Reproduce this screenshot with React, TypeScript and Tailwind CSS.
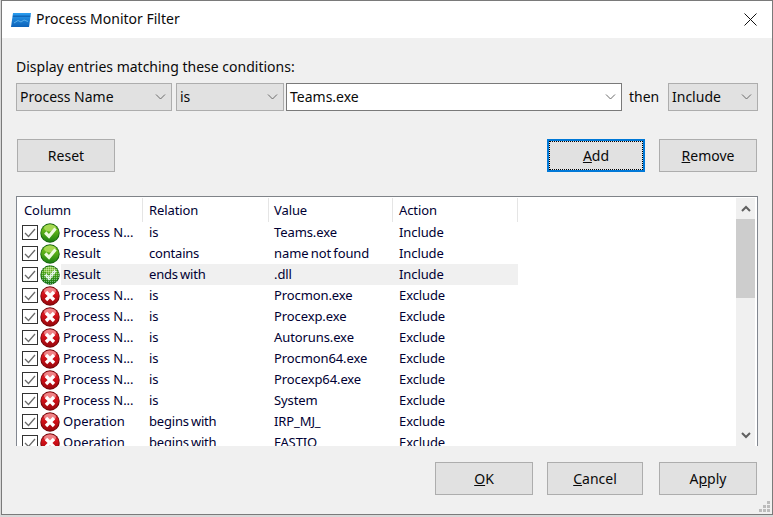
import React from "react";

const Chevron = ({ className = "" }: { className?: string }) => (
  <svg width="11" height="6" viewBox="0 0 11 6" className={className}>
    <path d="M1 0.5 L5.5 5 L10 0.5" fill="none" stroke="#6b6b6b" strokeWidth="1" />
  </svg>
);

const Combo = ({ text, className }: { text: string; className: string }) => (
  <div className={`flex h-[28px] items-center justify-between pl-[3px] pr-[5px] border ${className}`}>
    <span>{text}</span>
    <Chevron />
  </div>
);

const Btn = ({ children, className = "" }: { children: React.ReactNode; className?: string }) => (
  <div className={`flex h-[33px] items-center justify-center border border-[#adadad] bg-[#e1e1e1] ${className}`}>
    {children}
  </div>
);

const Check = () => (
  <div className="flex h-[15px] w-[16px] shrink-0 items-center justify-center border border-[#333333] bg-white">
    <svg width="12" height="10" viewBox="0 0 12 10">
      <path d="M1 5 L4.5 8.5 L11 1" fill="none" stroke="#6a6a6a" strokeWidth="1.3" />
    </svg>
  </div>
);

const Orb = ({ kind, dither }: { kind: "ok" | "no"; dither?: boolean }) => {
  const id = `${kind}${dither ? "d" : ""}`;
  const ok = kind === "ok";
  return (
    <svg width="20" height="20" viewBox="0 0 20 20" className="ml-[2px] shrink-0">
      <defs>
        <linearGradient id={`g${id}`} x1="0" y1="0" x2="0" y2="1">
          <stop offset="0%" stopColor={ok ? "#7cc520" : "#e0303a"} />
          <stop offset="45%" stopColor={ok ? "#58ae18" : "#d01018"} />
          <stop offset="100%" stopColor={ok ? "#1c7f12" : "#96070d"} />
        </linearGradient>
        <pattern id={`p${id}`} width="2" height="2" patternUnits="userSpaceOnUse">
          <rect width="1" height="1" fill="#c8e4ff" fillOpacity="0.5" />
          <rect x="1" y="1" width="1" height="1" fill="#0a6a20" fillOpacity="0.45" />
        </pattern>
      </defs>
      <circle cx="10" cy="10" r="9.7" fill={ok ? "#14600e" : "#6e0508"} />
      <circle cx="10" cy="10" r="8.8" fill={`url(#g${id})`} />
      <ellipse cx="10" cy="5" rx="6" ry="3.4" fill={ok ? "#b4e060" : "#f49a9c"} fillOpacity="0.8" />
      {ok ? (
        <path d="M5.2 9.5 L9 13.3 L15.5 5.5" fill="none" stroke="#eefbe0" strokeWidth="3.2" />
      ) : (
        <path d="M6 6 L14 14 M14 6 L6 14" fill="none" stroke="#ffffff" strokeWidth="3.4" />
      )}
      {dither && <circle cx="10" cy="10" r="9.7" fill={`url(#p${id})`} />}
    </svg>
  );
};

const rows: [string, string, string, string, "ok" | "no"][] = [
  ["Process N...", "is", "Teams.exe", "Include", "ok"],
  ["Result", "contains", "name not found", "Include", "ok"],
  ["Result", "ends with", ".dll", "Include", "ok"],
  ["Process N...", "is", "Procmon.exe", "Exclude", "no"],
  ["Process N...", "is", "Procexp.exe", "Exclude", "no"],
  ["Process N...", "is", "Autoruns.exe", "Exclude", "no"],
  ["Process N...", "is", "Procmon64.exe", "Exclude", "no"],
  ["Process N...", "is", "Procexp64.exe", "Exclude", "no"],
  ["Process N...", "is", "System", "Exclude", "no"],
  ["Operation", "begins with", "IRP_MJ_", "Exclude", "no"],
  ["Operation", "begins with", "FASTIO_", "Exclude", "no"],
];

export default function App() {
  return (
    <div className="h-[517px] w-[773px] overflow-hidden bg-[#d8d8d8] pl-px font-['Noto_Sans',sans-serif] text-[14px] leading-[20px] text-[#0a0a0a]">
      <div className="flex h-[515px] w-[772px] flex-col border border-[#7a7a7a] bg-[#f0f0f0]">
        {/* title bar */}
        <div className="flex h-[37px] shrink-0 items-center justify-between bg-white pl-[9px] pr-[15px]">
          <div className="flex items-center gap-[5px]">
            <svg width="20" height="16" viewBox="0 0 20 16">
              <defs>
                <linearGradient id="logo" x1="0" y1="0" x2="0" y2="1">
                  <stop offset="0%" stopColor="#2a9df0" />
                  <stop offset="100%" stopColor="#0d62b8" />
                </linearGradient>
              </defs>
              <path d="M2 1 H20 L18 15 H0 Z" fill="url(#logo)" />
              <path d="M2 3.5 H19.5 L19.2 5 H1.8 Z" fill="#0a57a8" fillOpacity="0.7" />
              <path d="M3 11 L7 8.5 L10 10 L13 8 L17 9.5" fill="none" stroke="#5aaee8" strokeWidth="1" />
            </svg>
            <span className="-translate-y-px">Process Monitor Filter</span>
          </div>
          <svg width="13" height="13" viewBox="0 0 13 13">
            <path d="M0.5 0.5 L12.5 12.5 M12.5 0.5 L0.5 12.5" stroke="#111111" strokeWidth="1" />
          </svg>
        </div>

        {/* content */}
        <div className="relative flex flex-1 flex-col pl-[14px]">
          <div className="mt-[19px]">Display entries matching these conditions:</div>

          <div className="mt-[6px] flex items-center">
            <Combo text="Process Name" className="w-[156px] border-[#adadad] bg-[#e1e1e1]" />
            <Combo text="is" className="ml-[4px] w-[108px] border-[#adadad] bg-[#e1e1e1]" />
            <Combo text="Teams.exe" className="ml-[2px] w-[336px] border-[#7a7a7a] bg-white" />
            <span className="ml-[7px] w-[39px]">then</span>
            <Combo text="Include" className="w-[90px] border-[#adadad] bg-[#e1e1e1]" />
          </div>

          <div className="mt-[28px] flex pl-px">
            <Btn className="w-[98px]">Reset</Btn>
            <div className="ml-[432px] flex h-[33px] w-[98px] items-center justify-center border-2 border-[#0078d7] bg-[#e1e1e1] outline-1 -outline-offset-3 outline-dotted outline-black">
              <span>
                <u>A</u>dd
              </span>
            </div>
            <Btn className="ml-[14px] w-[98px]">
              <span>
                <u>R</u>emove
              </span>
            </Btn>
          </div>

          {/* list */}
          <div className="mt-[24px] flex h-[250px] w-[742px] border-x border-t border-x-[#828790] border-t-[#7f8388] bg-white text-[13px] text-[#000033]">
            <div className="w-[719px] overflow-hidden">
              <div className="grid h-[25px] w-[501px] grid-cols-[126px_126px_124px_125px] items-center">
                {["Column", "Relation", "Value", "Action"].map((h, i) => (
                  <div
                    key={h}
                    className={`flex h-[24px] items-center border-r border-[#e5e5e5] tracking-[-0.1px] ${
                      i === 0 ? "pl-[7px]" : i === 2 ? "pl-[5px]" : "pl-[6px]"
                    }`}
                  >
                    {h}
                  </div>
                ))}
              </div>
              {rows.map((r, i) => (
                <div key={i} className="flex h-[21px] w-[501px] items-center">
                  <div className="flex w-[44px] shrink-0 items-center pl-[5px]">
                    <Check />
                    <Orb kind={r[4]} dither={i === 2} />
                  </div>
                  <div
                    className={`grid h-[21px] w-[457px] grid-cols-[82px_126px_124px_125px] items-center pb-[2px] ${
                      i === 2 ? "bg-[#f0f0f0]" : ""
                    }`}
                  >
                    <div className="pl-[2px]">{r[0]}</div>
                    <div className="pl-[6px] tracking-[-0.2px] [word-spacing:-1px]">{r[1]}</div>
                    <div className="pl-[5px] tracking-[-0.1px] [word-spacing:-1px]">{r[2]}</div>
                    <div className="pl-[6px] tracking-[-0.1px]">{r[3]}</div>
                  </div>
                </div>
              ))}
            </div>
            <div className="mt-px flex w-[19px] flex-col items-center bg-[#f0f0f0]">
              <div className="flex h-[21px] w-full items-center justify-center">
                <svg width="10" height="7" viewBox="0 0 10 7">
                  <path d="M1 6 L5 2 L9 6" fill="none" stroke="#606060" strokeWidth="2" />
                </svg>
              </div>
              <div className="h-[79px] w-full bg-[#cdcdcd]" />
              <div className="flex-1" />
              <div className="flex h-[21px] w-full items-center justify-center">
                <svg width="10" height="7" viewBox="0 0 10 7">
                  <path d="M1 1 L5 5 L9 1" fill="none" stroke="#606060" strokeWidth="2" />
                </svg>
              </div>
            </div>
          </div>

          <div className="mt-[16px] flex pl-[419px]">
            <Btn className="w-[98px]">
              <span>
                <u>O</u>K
              </span>
            </Btn>
            <Btn className="ml-[14px] w-[96px]">
              <span>
                <u>C</u>ancel
              </span>
            </Btn>
            <Btn className="ml-[16px] w-[98px]">
              <span>
                A<u>p</u>ply
              </span>
            </Btn>
          </div>

          <svg width="12" height="12" viewBox="0 0 12 12" className="absolute bottom-[1px] right-[1px]">
            <g fill="#bcbcbc">
              <rect x="8" y="0" width="3" height="3" />
              <rect x="4" y="4" width="3" height="3" />
              <rect x="8" y="4" width="3" height="3" />
              <rect x="0" y="8" width="3" height="3" />
              <rect x="4" y="8" width="3" height="3" />
              <rect x="8" y="8" width="3" height="3" />
            </g>
          </svg>
        </div>
      </div>
    </div>
  );
}
